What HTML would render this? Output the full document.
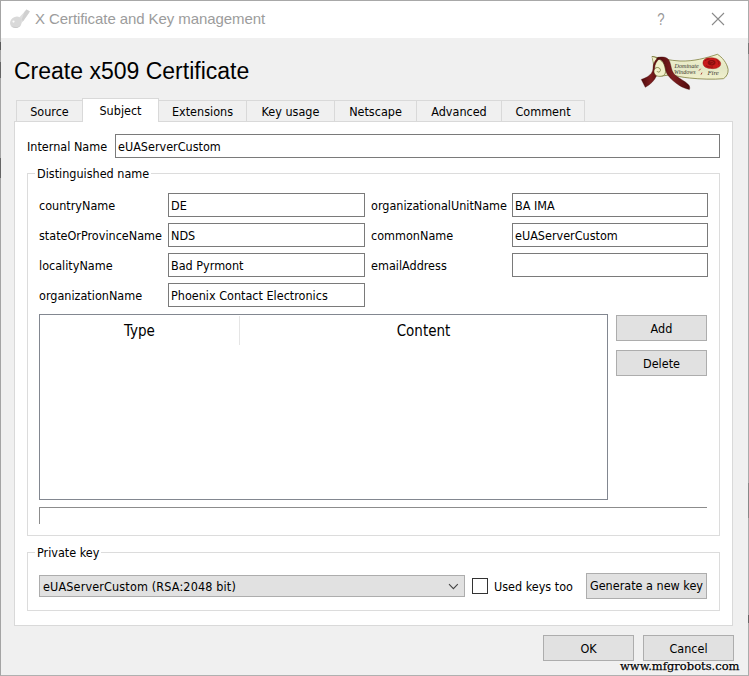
<!DOCTYPE html>
<html>
<head>
<meta charset="utf-8">
<title>X Certificate and Key management</title>
<style>
html,body{margin:0;padding:0;}
body{width:749px;height:676px;overflow:hidden;background:#f0f0f0;position:relative;
 font-family:"DejaVu Sans Condensed","DejaVu Sans","Liberation Sans",sans-serif;font-stretch:condensed;font-size:12.5px;color:#000;}
.abs{position:absolute;}
#win{position:absolute;left:0;top:0;width:749px;height:676px;box-sizing:border-box;border-top:1px solid #a8a8a8;border-left:1px solid #a4a4a4;border-right:1px solid #ababab;border-bottom:1px solid #b0b0b0;background:#f0f0f0;}
#titlebar{position:absolute;left:1px;top:1px;width:747px;height:37px;background:#fff;}
#title{position:absolute;left:35px;top:9px;font-family:"Liberation Sans",sans-serif;font-size:15px;color:#9c9c9c;white-space:nowrap;line-height:20px;letter-spacing:-0.08px;}
#h1{position:absolute;left:14px;top:56px;font-family:"Liberation Sans",sans-serif;font-size:23px;line-height:30px;white-space:nowrap;color:#000;}
.tab{position:absolute;top:100px;height:21px;box-sizing:border-box;border:1px solid #d9d9d9;border-bottom:none;background:#f0f0f0;text-align:center;line-height:21px;white-space:nowrap;}
.tab.sel{top:98px;height:24px;background:#fff;line-height:24px;z-index:3;}
#pane{position:absolute;left:14px;top:121px;width:719px;height:505px;box-sizing:border-box;border:1px solid #d9d9d9;background:#fff;}
.lbl{position:absolute;white-space:nowrap;line-height:16px;}
.inp{position:absolute;box-sizing:border-box;border:1px solid #7a7a7a;background:#fff;height:24px;line-height:23px;padding-left:2px;white-space:nowrap;}
.grp{position:absolute;box-sizing:border-box;border:1px solid #dcdcdc;}
.grp .gl{position:absolute;left:7px;top:-8px;background:#fff;padding:0 2px;line-height:16px;white-space:nowrap;}
.btn{position:absolute;box-sizing:border-box;border:1px solid #adadad;background:#e1e1e1;text-align:center;white-space:nowrap;}
</style>
</head>
<body>
<div id="win">
</div>
<div id="titlebar"></div>
<div class="abs" style="left:0;top:42px;width:1px;height:8px;background:#5a5a5a"></div>
<div class="abs" style="left:0;top:62px;width:1px;height:16px;background:#666"></div>
<div class="abs" style="left:0;top:158px;width:1px;height:20px;background:#666"></div>
<div class="abs" style="left:748px;top:43px;width:1px;height:11px;background:#777"></div>
<div class="abs" style="left:748px;top:483px;width:1px;height:35px;background:#888"></div>
<div class="abs" style="left:748px;top:615px;width:1px;height:8px;background:#666"></div>
<svg class="abs" style="left:0;top:0" width="40" height="38" viewBox="0 0 40 38">
 <path d="M19.2 17.6 L26.6 9.6 L29.8 11.6 L28.6 13.4 L22.4 22.2 Z" fill="#dedede"/>
 <path d="M24.6 11.8 L26.6 9.6 L29.8 11.6 L23.2 21 L21.6 19.8 Z" fill="#d0d0d0"/>
 <ellipse cx="16" cy="22.3" rx="6.3" ry="5.4" transform="rotate(-38 16 22.3)" fill="#d9d9d9"/>
 <path d="M11.5 26 C14 29 19.5 28.5 21.5 24.5 C20 27 15 28 11.5 26 Z" fill="#c8c8c8"/>
 <circle cx="13.5" cy="21.6" r="1.1" fill="#fbfbfb"/>
</svg>
<div id="title">X Certificate and Key management</div>
<div class="abs" style="left:654px;top:9px;width:14px;font-family:'Liberation Sans',sans-serif;font-size:16.5px;color:#999;line-height:20px;text-align:center;transform:scaleX(0.8)">?</div>
<svg class="abs" style="left:711px;top:12px" width="14" height="14" viewBox="0 0 14 14"><path d="M1 1 L13 13 M13 1 L1 13" stroke="#8a8a8a" stroke-width="1.1" fill="none"/></svg>

<div id="h1">Create x509 Certificate</div>

<!-- logo -->
<svg class="abs" style="left:640px;top:50px" width="96" height="46" viewBox="0 0 96 46">
 <defs>
  <linearGradient id="pg" x1="0" y1="0" x2="0" y2="1"><stop offset="0" stop-color="#f4f3cf"/><stop offset="0.55" stop-color="#e4e7c6"/><stop offset="1" stop-color="#f1f0cc"/></linearGradient>
  <linearGradient id="rg" x1="0" y1="0" x2="1" y2="0"><stop offset="0" stop-color="#4f0b0c"/><stop offset="0.5" stop-color="#7e1d1f"/><stop offset="1" stop-color="#4f0b0c"/></linearGradient>
 </defs>
 <!-- paper -->
 <path d="M12 6.4 C22 8.5 30 10.5 40 11 C54 11.5 66 8 77.4 4.3 C82 7 87 13 88.1 19.4 C88.5 23 86.5 27 83.4 28.7 C74 29.6 60 29.2 49.4 28 C42 27.3 36 26 31.4 24.7 L22 26 L14.5 24 L13.2 12 Z" fill="url(#pg)" stroke="#7f7f3e" stroke-width="0.8"/>
 <!-- roll -->
 <path d="M12 6.4 C18 7.5 23.5 11 24.8 16.5 C25.8 20 25.8 23 24.6 24.6 C22.5 26.8 17.5 27 15 24.8 C12.8 22.6 13.4 19 16 17.8 C18.4 16.8 20.8 18.4 20.4 20.6 C20 22.4 17.6 22.6 17 21.2" fill="#f1f0cb" stroke="#77773a" stroke-width="0.8"/>
 <!-- ribbon left tail -->
 <path d="M18.6 7.4 C15 9.5 13 14 13 18.5 C13 23.5 8 27.5 1.3 29.4 L5.3 37.3 C10.5 34.5 14.5 30.5 16.4 26 C14 24.5 13.2 21 14.6 18.8 C14.6 14.5 16.5 10.5 20 8.4 Z" fill="url(#rg)" stroke="#430a0b" stroke-width="0.4"/>
 <!-- ribbon right tail -->
 <path d="M16.4 8.2 C19.5 6.4 24.5 6.6 27.4 8.4 C29.6 10 30.2 13 30.8 15.6 C31.4 19 32.4 22.4 35 25 C38.6 28.2 45 31 48.6 34.8 C49.8 36.2 50 38 49.4 39.6 C45.6 38.6 42 37.2 39 35.2 C35 32.6 30.4 28.8 27.6 24.8 C25.8 22 25.6 18.4 24.6 15.4 C23.8 12.8 22.6 10.4 20.2 9.4 C18.8 9 17.4 8.8 16.4 8.2 Z" fill="url(#rg)" stroke="#430a0b" stroke-width="0.4"/>
 <!-- seal -->
 <path d="M63 12 C63.6 9 67 7.6 70.4 7.8 C73.6 7.4 77.6 8.6 79.4 10.8 C81.2 12.6 81.2 15.2 79.2 16.8 C77 18.6 73.4 19 70.4 18.4 C67 18.4 63.8 16.8 63.2 14.4 C62.9 13.6 62.9 12.8 63 12 Z" fill="#c81a1a" stroke="#8a0c0c" stroke-width="0.4"/>
 <path d="M68 11.4 C69.4 9.8 73.4 9.6 75 11 C76.2 12.4 75.4 14.6 73.4 15.2 C71 16 68.4 15.2 67.8 13.6 C67.5 12.8 67.6 12 68 11.4 Z" fill="#8c0e0e"/>
 <path d="M70 12 C71 11.2 73 11.4 73.4 12.4 C73.6 13.4 72.4 14 71.2 13.8" fill="none" stroke="#d42a2a" stroke-width="0.5"/>
 <path d="M65 11 C66 9.6 68 9 69.4 9.2 M76.6 10 C78.4 11 79.4 12.8 78.6 14.6 M66 15.6 C68 17 71 17.4 73 17" fill="none" stroke="#7a0a0a" stroke-width="0.6"/>
 <path d="M59 20.6 L60.6 18.8 M61 24.6 L62 22.6" stroke="#a01414" stroke-width="0.8" fill="none"/>
 <text x="34.6" y="17.6" font-family="'Liberation Serif',serif" font-style="italic" font-size="6" fill="#3c3c30" textLength="24" lengthAdjust="spacingAndGlyphs">Dominate</text>
 <text x="34" y="23.6" font-family="'Liberation Serif',serif" font-style="italic" font-size="6" fill="#3c3c30" textLength="21.5" lengthAdjust="spacingAndGlyphs">Windows</text>
 <text x="67.4" y="25.4" font-family="'Liberation Serif',serif" font-style="italic" font-size="6" fill="#3c3c30" textLength="11.5" lengthAdjust="spacingAndGlyphs">Fire</text>
</svg>

<!-- tabs -->
<div class="tab" style="left:16px;width:67px">Source</div>
<div class="tab sel" style="left:82px;width:77px">Subject</div>
<div class="tab" style="left:158px;width:89px">Extensions</div>
<div class="tab" style="left:246px;width:89px">Key usage</div>
<div class="tab" style="left:334px;width:83px">Netscape</div>
<div class="tab" style="left:416px;width:86px">Advanced</div>
<div class="tab" style="left:501px;width:84px">Comment</div>
<div id="pane"></div>

<div class="lbl" style="left:27px;top:139px">Internal Name</div>
<div class="inp" style="left:115px;top:134px;width:605px">eUAServerCustom</div>

<div class="grp" style="left:27px;top:173px;width:693px;height:363px"><span class="gl">Distinguished name</span></div>

<div class="lbl" style="left:39px;top:198px">countryName</div>
<div class="lbl" style="left:39px;top:228px">stateOrProvinceName</div>
<div class="lbl" style="left:39px;top:258px">localityName</div>
<div class="lbl" style="left:39px;top:288px">organizationName</div>
<div class="inp" style="left:168px;top:193px;width:197px">DE</div>
<div class="inp" style="left:168px;top:223px;width:197px">NDS</div>
<div class="inp" style="left:168px;top:253px;width:197px">Bad Pyrmont</div>
<div class="inp" style="left:168px;top:283px;width:197px">Phoenix Contact Electronics</div>

<div class="lbl" style="left:371px;top:198px">organizationalUnitName</div>
<div class="lbl" style="left:371px;top:228px">commonName</div>
<div class="lbl" style="left:371px;top:258px">emailAddress</div>
<div class="inp" style="left:512px;top:193px;width:196px">BA IMA</div>
<div class="inp" style="left:512px;top:223px;width:196px">eUAServerCustom</div>
<div class="inp" style="left:512px;top:253px;width:196px"></div>

<!-- table -->
<div class="abs" style="left:39px;top:314px;width:569px;height:186px;box-sizing:border-box;border:1px solid #828790;background:#fff"></div>
<div class="abs" style="left:239px;top:316px;width:1px;height:29px;background:#e5e5e5"></div>
<div class="abs" style="left:40px;top:321px;width:199px;text-align:center;font-size:15px;line-height:20px">Type</div>
<div class="abs" style="left:240px;top:321px;width:367px;text-align:center;font-size:15px;line-height:20px">Content</div>

<div class="btn" style="left:616px;top:315px;width:91px;height:26px;line-height:26px">Add</div>
<div class="btn" style="left:616px;top:350px;width:91px;height:26px;line-height:26px">Delete</div>

<div class="abs" style="left:39px;top:507px;width:668px;height:17px;box-sizing:border-box;border-top:1px solid #8c8c8c;border-left:1px solid #8c8c8c;"></div>

<div class="grp" style="left:27px;top:552px;width:693px;height:59px"><span class="gl">Private key</span></div>
<div class="btn" style="left:39px;top:575px;width:426px;height:22px;line-height:22px;text-align:left;padding-left:3px;letter-spacing:0.15px">eUAServerCustom (RSA:2048 bit)</div>
<svg class="abs" style="left:447px;top:583px" width="12" height="8" viewBox="0 0 12 8"><path d="M2 1.2 L6.4 5.6 L10.8 1.2" stroke="#444" stroke-width="1.1" fill="none"/></svg>
<div class="abs" style="left:472px;top:578px;width:16px;height:16px;box-sizing:border-box;border:1px solid #333;background:#fff"></div>
<div class="lbl" style="left:494px;top:579px">Used keys too</div>
<div class="btn" style="left:586px;top:573px;width:121px;height:26px;line-height:24px">Generate a new key</div>

<div class="btn" style="left:543px;top:635px;width:91px;height:26px;line-height:26px">OK</div>
<div class="btn" style="left:643px;top:635px;width:91px;height:26px;line-height:26px">Cancel</div>

<div class="abs" style="left:620px;top:658px;font-family:'DejaVu Serif',serif;font-stretch:normal;font-size:11.5px;-webkit-text-stroke:0.25px #000;line-height:16px;color:#000;white-space:nowrap;text-shadow:0 0 2px #fff,0 0 2px #fff,0 0 3px #fff">www.mfgrobots.com</div>
</body>
</html>
